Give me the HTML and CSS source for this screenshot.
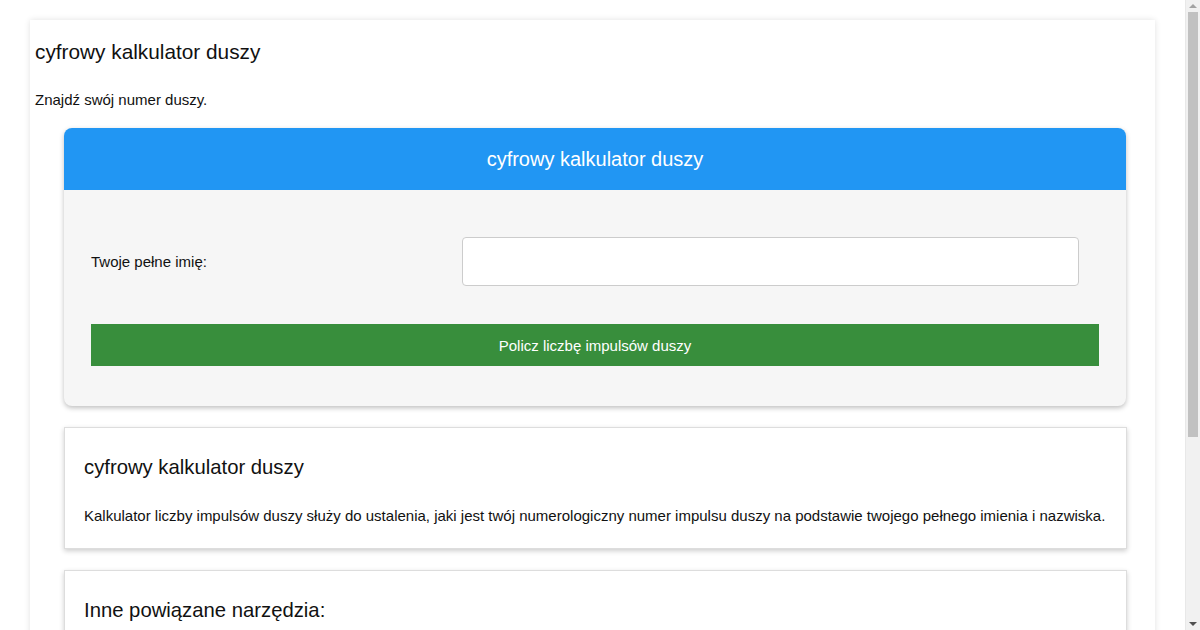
FILE: index.html
```html
<!DOCTYPE html>
<html lang="pl">
<head>
    <meta charset="UTF-8">
    <meta name="viewport" content="width=device-width, initial-scale=1.0">
    <title>cyfrowy kalkulator duszy</title>
    <link rel="stylesheet" href="styles.css">
</head>
<body>
    <div class="page">
        <h1>cyfrowy kalkulator duszy</h1>
        <p class="intro">Znajdź swój numer duszy.</p>

        <div class="calc">
            <div class="calc-head">cyfrowy kalkulator duszy</div>
            <div class="calc-body">
                <div class="form-row">
                    <label for="full-name">Twoje pełne imię:</label>
                    <input type="text" id="full-name">
                </div>
                <button type="button">Policz liczbę impulsów duszy</button>
            </div>
        </div>

        <div class="box">
            <h2>cyfrowy kalkulator duszy</h2>
            <p>Kalkulator liczby impulsów duszy służy do ustalenia, jaki jest twój numerologiczny numer impulsu duszy na podstawie twojego pełnego imienia i nazwiska.</p>
        </div>

        <div class="box">
            <h2>Inne powiązane narzędzia:</h2>
            <ul class="tools">
                <li><a href="#">Kalkulator liczby ścieżki życia</a></li>
                <li><a href="#">Kalkulator liczby przeznaczenia</a></li>
                <li><a href="#">Kalkulator liczby osobowości</a></li>
                <li><a href="#">Kalkulator liczby urodzin</a></li>
                <li><a href="#">Kalkulator dojrzałości</a></li>
                <li><a href="#">Kalkulator roku osobistego</a></li>
            </ul>
        </div>
    </div>

    <!-- scrollbar gutter, drawn by hand -->
    <div class="scrollbar">
        <span class="arrow up"></span>
        <span class="thumb"></span>
        <span class="arrow down"></span>
    </div>
</body>
</html>
```

FILE: styles.css
```css
body {
    margin: 0 15px 0 0;
    background: #fff;
    font-family: "Liberation Sans", Arial, sans-serif;
    color: #111;
}

.page {
    width: 1125px;
    margin: 20px auto;
    padding: 5px;
    box-sizing: border-box;
    background: #fff;
    box-shadow: 0 0 6px rgba(0, 0, 0, 0.12);
}

h1 {
    font-size: 20.8px;
    font-weight: normal;
    margin: 15px 0 0;
}

.intro {
    font-size: 15px;
    margin: 27px 0 20px;
}

.calc {
    width: 1062px;
    margin-left: 29px;
    border-radius: 8px;
    overflow: hidden;
    background: #f6f6f6;
    box-shadow: 0 2px 5px rgba(0, 0, 0, 0.25);
}

.calc-head {
    background: #2196f3;
    color: #fff;
    text-align: center;
    font-size: 20px;
    height: 62px;
    line-height: 62px;
}

.calc-body {
    padding: 47px 27px 40px;
}

.form-row {
    display: grid;
    grid-template-columns: 371px 617px;
    align-items: center;
    margin-bottom: 38px;
}

.form-row label {
    font-size: 15px;
}

.form-row input {
    height: 49px;
    box-sizing: border-box;
    border: 1px solid #ccc;
    border-radius: 4px;
    background: #fff;
    font-size: 15px;
    padding: 0 10px;
}

button {
    display: block;
    width: 100%;
    height: 42px;
    border: none;
    background: #388e3c;
    color: #fff;
    font-family: inherit;
    font-size: 15px;
    cursor: pointer;
}

.box {
    width: 1063px;
    margin: 21px 0 0 29px;
    padding: 20px 16px 20px 19px;
    box-sizing: border-box;
    background: #fff;
    border: 1px solid #ddd;
    box-shadow: 0 2px 5px rgba(0, 0, 0, 0.2);
}

.box h2 {
    font-size: 20.3px;
    font-weight: normal;
    margin: 8px 0 28px;
}

.box p {
    font-size: 15px;
    margin: 0 0 4px;
}

.tools {
    font-size: 15px;
    line-height: 28px;
}

.tools a {
    color: #1a73e8;
    text-decoration: none;
}

.scrollbar {
    position: fixed;
    top: 0;
    right: 0;
    width: 15px;
    height: 100vh;
    background: #f1f1f1;
    border-left: 1px solid #e8e8e8;
    box-sizing: border-box;
}

.thumb {
    position: absolute;
    left: 2px;
    right: 2px;
    top: 12px;
    height: 425px;
    background: #c1c1c1;
}

.arrow {
    position: absolute;
    left: 3px;
    width: 0;
    height: 0;
    border-left: 4px solid transparent;
    border-right: 4px solid transparent;
}

.arrow.up {
    top: 4px;
    border-bottom: 4px solid #a3a3a3;
}

.arrow.down {
    bottom: 4px;
    border-top: 4px solid #505050;
}
```
